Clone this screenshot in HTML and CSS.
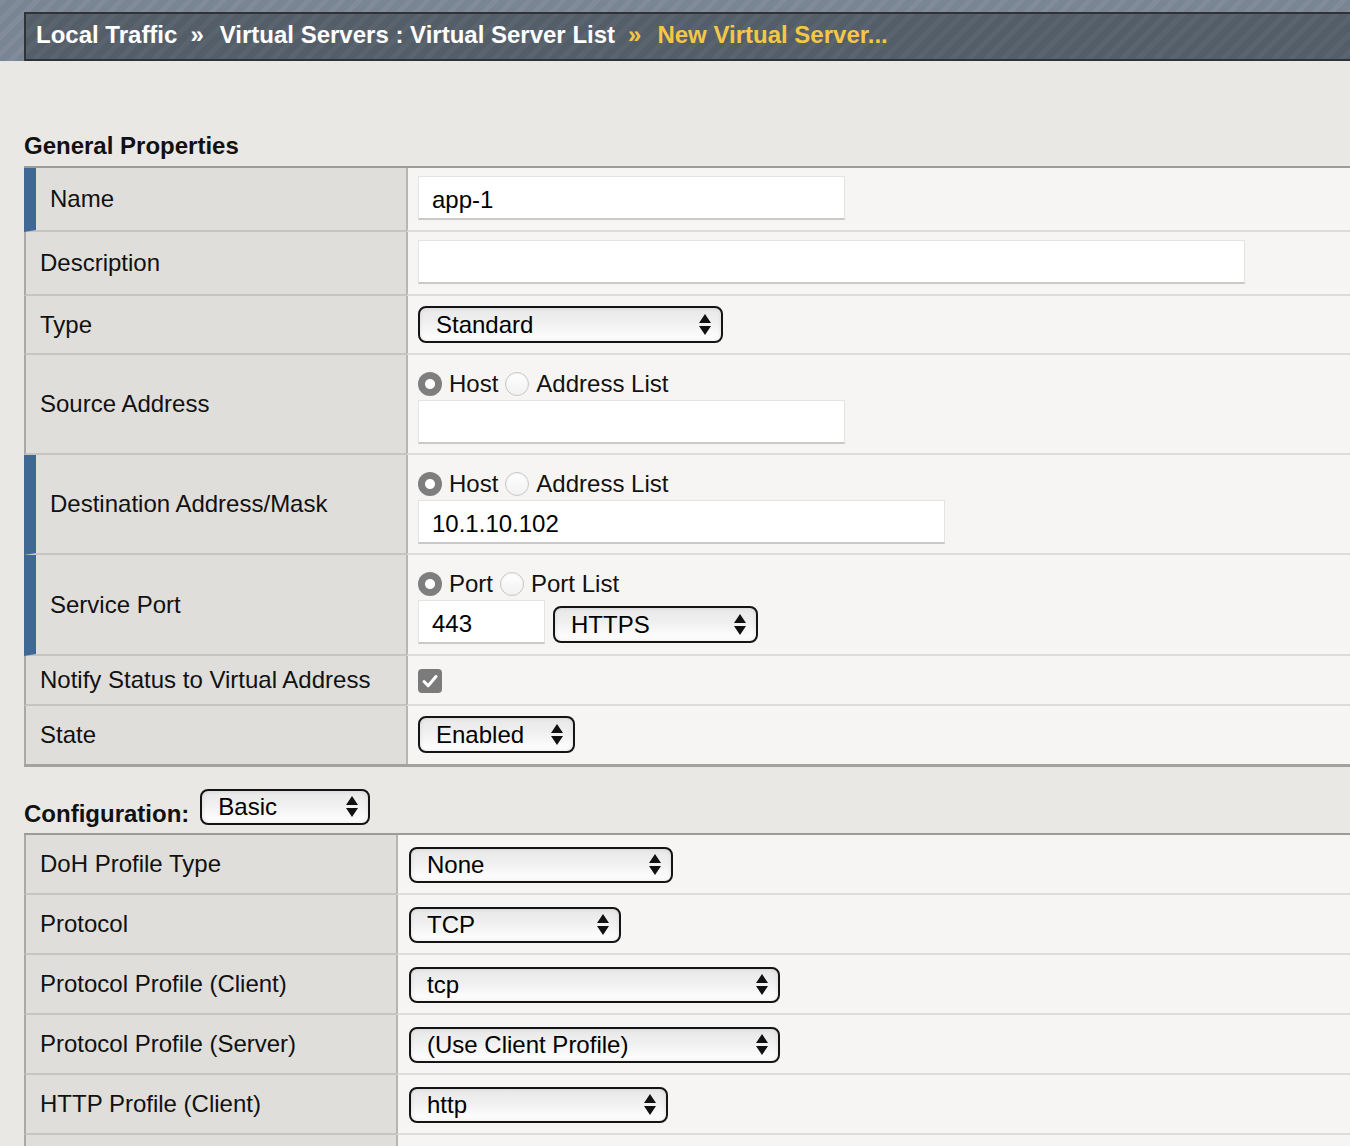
FILE: index.html
```html
<!DOCTYPE html>
<html lang="en">
<head>
<meta charset="utf-8">
<title>New Virtual Server</title>
<link rel="stylesheet" href="styles.css">
</head>
<body>
<header class="topbar">
  <nav class="crumbs">
    <span class="crumb">Local Traffic</span>
    <span class="sep">»</span>
    <span class="crumb">Virtual Servers : Virtual Server List</span>
    <span class="sep current">»</span>
    <span class="crumb current">New Virtual Server...</span>
  </nav>
</header>

<main class="content">
  <h2 class="section-title">General Properties</h2>

  <div class="ptable t1">
    <div class="row">
      <div class="label req">Name</div>
      <div class="value v-input"><input class="text w427" type="text" value="app-1"></div>
    </div>
    <div class="row">
      <div class="label">Description</div>
      <div class="value v-input"><input class="text w827" type="text" value=""></div>
    </div>
    <div class="row">
      <div class="label">Type</div>
      <div class="value v-select">
        <div class="select w305"><span class="sel-text">Standard</span><svg class="arrows" viewBox="0 0 12 21" width="12" height="21"><path d="M6 0L12 9L0 9Z M0 12L12 12L6 21Z"/></svg></div>
      </div>
    </div>
    <div class="row">
      <div class="label">Source Address</div>
      <div class="value v-radio">
        <div class="radios">
          <input class="radio" type="radio" name="src" checked><span class="rlabel">Host</span>
          <input class="radio" type="radio" name="src"><span class="rlabel">Address List</span>
        </div>
        <input class="text w427" type="text" value="">
      </div>
    </div>
    <div class="row">
      <div class="label req">Destination Address/Mask</div>
      <div class="value v-radio">
        <div class="radios">
          <input class="radio" type="radio" name="dst" checked><span class="rlabel">Host</span>
          <input class="radio" type="radio" name="dst"><span class="rlabel">Address List</span>
        </div>
        <input class="text w527" type="text" value="10.1.10.102">
      </div>
    </div>
    <div class="row">
      <div class="label req">Service Port</div>
      <div class="value v-radio v-port">
        <div class="radios">
          <input class="radio" type="radio" name="port" checked><span class="rlabel">Port</span>
          <input class="radio" type="radio" name="port"><span class="rlabel">Port List</span>
        </div>
        <div class="port-row">
          <input class="text w127" type="text" value="443">
          <div class="select w205 port-select"><span class="sel-text">HTTPS</span><svg class="arrows" viewBox="0 0 12 21" width="12" height="21"><path d="M6 0L12 9L0 9Z M0 12L12 12L6 21Z"/></svg></div>
        </div>
      </div>
    </div>
    <div class="row">
      <div class="label">Notify Status to Virtual Address</div>
      <div class="value v-check">
        <span class="checkbox" role="checkbox" aria-checked="true"><svg viewBox="0 0 24 24" width="24" height="24"><path d="M6 12.5L10.2 16.8L18 7.5" fill="none" stroke="#fff" stroke-width="3" stroke-linecap="round" stroke-linejoin="round"/></svg></span>
      </div>
    </div>
    <div class="row">
      <div class="label">State</div>
      <div class="value v-select v-last">
        <div class="select w157"><span class="sel-text">Enabled</span><svg class="arrows" viewBox="0 0 12 21" width="12" height="21"><path d="M6 0L12 9L0 9Z M0 12L12 12L6 21Z"/></svg></div>
      </div>
    </div>
  </div>

  <div class="config">
    <span class="config-label">Configuration:</span>
    <div class="select s36 w170"><span class="sel-text">Basic</span><svg class="arrows" viewBox="0 0 12 21" width="12" height="21"><path d="M6 0L12 9L0 9Z M0 12L12 12L6 21Z"/></svg></div>
  </div>

  <div class="ptable t2">
    <div class="row">
      <div class="label">DoH Profile Type</div>
      <div class="value v-select2">
        <div class="select s36 w264"><span class="sel-text">None</span><svg class="arrows" viewBox="0 0 12 21" width="12" height="21"><path d="M6 0L12 9L0 9Z M0 12L12 12L6 21Z"/></svg></div>
      </div>
    </div>
    <div class="row">
      <div class="label">Protocol</div>
      <div class="value v-select2">
        <div class="select s36 w212"><span class="sel-text">TCP</span><svg class="arrows" viewBox="0 0 12 21" width="12" height="21"><path d="M6 0L12 9L0 9Z M0 12L12 12L6 21Z"/></svg></div>
      </div>
    </div>
    <div class="row">
      <div class="label">Protocol Profile (Client)</div>
      <div class="value v-select2">
        <div class="select s36 w371"><span class="sel-text">tcp</span><svg class="arrows" viewBox="0 0 12 21" width="12" height="21"><path d="M6 0L12 9L0 9Z M0 12L12 12L6 21Z"/></svg></div>
      </div>
    </div>
    <div class="row">
      <div class="label">Protocol Profile (Server)</div>
      <div class="value v-select2">
        <div class="select s36 w371"><span class="sel-text">(Use Client Profile)</span><svg class="arrows" viewBox="0 0 12 21" width="12" height="21"><path d="M6 0L12 9L0 9Z M0 12L12 12L6 21Z"/></svg></div>
      </div>
    </div>
    <div class="row">
      <div class="label">HTTP Profile (Client)</div>
      <div class="value v-select2">
        <div class="select s36 w259"><span class="sel-text">http</span><svg class="arrows" viewBox="0 0 12 21" width="12" height="21"><path d="M6 0L12 9L0 9Z M0 12L12 12L6 21Z"/></svg></div>
      </div>
    </div>
    <div class="row">
      <div class="label"></div>
      <div class="value v-empty"></div>
    </div>
  </div>
</main>
</body>
</html>
```

FILE: styles.css
```css
*, *::before, *::after { box-sizing: border-box; }

html, body {
  margin: 0;
  padding: 0;
  overflow: hidden;
}

body {
  font-family: "Liberation Sans", Arial, Helvetica, sans-serif;
  font-size: 24px;
  color: #111;
  background: #e9e8e4;
}

/* ---------- top breadcrumb bar ---------- */
.topbar {
  height: 61px;
  padding: 12px 0 0 24px;
  background-color: #7a8594;
  background-image: repeating-linear-gradient(135deg, rgba(255,255,255,0.05) 0 5px, rgba(255,255,255,0) 5px 12px);
}

.crumbs {
  height: 49px;
  display: flex;
  align-items: center;
  padding: 0 0 3px 10px;
  border: 2px solid #2f3338;
  border-right: 0;
  background-color: #545e69;
  background-image: repeating-linear-gradient(135deg, rgba(255,255,255,0.035) 0 5px, rgba(255,255,255,0) 5px 12px);
  color: #fff;
  font-weight: bold;
  font-size: 24px;
  line-height: 42px;
  white-space: nowrap;
}

.sep { margin: 0 16px 0 13px; }
.current { color: #f6c745; }

/* ---------- content ---------- */
.content { padding-left: 24px; }

.section-title {
  margin: 71px 0 6px;
  font-size: 24px;
  line-height: 28px;
  font-weight: bold;
  color: #111;
}

.ptable {
  border-top: 2px solid #9c9b98;
  border-bottom: 3px solid #a3a29f;
}

.row {
  display: grid;
  grid-template-columns: 382px 1fr;
}
.t2 .row { grid-template-columns: 372px 1fr; }

.label {
  display: flex;
  align-items: center;
  padding-left: 14px;
  background: #dfdeda;
  border-left: 2px solid #aaa9a6;
  border-bottom: 2px solid #c6c5c1;
  color: #111;
  line-height: 28px;
}
.label.req { border-left: 12px solid #3f6894; }

.value {
  background: #f6f5f3;
  border-left: 2px solid #b7b6b3;
  border-bottom: 2px solid #dddcd9;
  padding-left: 10px;
}
.t2 .value { padding-left: 11px; }

.row:last-child > .label,
.row:last-child > .value { border-bottom: 0; }

.v-input  { padding-top: 8px;  padding-bottom: 10px; }
.v-select { padding-top: 10px; padding-bottom: 10px; }
.v-last   { padding-bottom: 11px; }
.v-radio  { padding-top: 15px; padding-bottom: 9px; }
.v-port   { padding-bottom: 10px; }
.v-check  { padding-top: 13px; padding-bottom: 11px; }
.v-select2 { padding-top: 12px; padding-bottom: 10px; }
.v-empty  { height: 58px; }

/* ---------- text inputs ---------- */
.text {
  display: block;
  height: 44px;
  margin: 0;
  padding: 5px 0 0 13px;
  border: 1px solid #e3e3e1;
  border-bottom: 2px solid #c9c9c7;
  background: #fff;
  color: #000;
  font: inherit;
  font-size: 24px;
  outline: none;
}

.w127 { width: 127px; }
.w157 { width: 157px; }
.w170 { width: 170px; }
.w205 { width: 205px; }
.w212 { width: 212px; }
.w259 { width: 259px; }
.w264 { width: 264px; }
.w305 { width: 305px; }
.w371 { width: 371px; }
.w427 { width: 427px; }
.w527 { width: 527px; }
.w827 { width: 827px; }

/* ---------- select look-alike ---------- */
.select {
  display: flex;
  align-items: center;
  height: 37px;
  padding: 0 10px 0 16px;
  border: 2px solid #141414;
  border-radius: 8px;
  background: linear-gradient(to bottom, #e8e8e8 0%, #efefef 40%, #f9f9f9 75%, #ffffff 100%);
  box-shadow: inset 0 0 4px rgba(0,0,0,0.10);
  color: #000;
  line-height: 33px;
}
.select.s36 { height: 36px; line-height: 31px; padding-bottom: 1px; }

.sel-text {
  flex: 1;
  white-space: nowrap;
  overflow: hidden;
}
.arrows { flex: none; fill: #111; }

/* ---------- radios ---------- */
.radios {
  display: flex;
  align-items: center;
  height: 28px;
  margin-bottom: 2px;
  line-height: 28px;
  color: #111;
}
.radio {
  -webkit-appearance: none;
  appearance: none;
  flex: none;
  width: 24px;
  height: 24px;
  margin: 0;
  border-radius: 50%;
  border: 1px solid #c8c8c8;
  background: linear-gradient(to bottom, #ffffff, #f1f1f1);
  box-shadow: inset 0 1px 2px rgba(0,0,0,0.06);
}
.radio:checked {
  border: 0;
  background: radial-gradient(circle at center, #ffffff 0 4.5px, #7e7e7e 5.5px);
  box-shadow: none;
}
.rlabel { margin: 0 7px; }

.port-row {
  display: flex;
  align-items: flex-start;
  gap: 8px;
}
.port-select { margin-top: 6px; }

/* ---------- checkbox ---------- */
.checkbox {
  display: block;
  width: 24px;
  height: 24px;
  border-radius: 4px;
  background: #7b7b7b;
}
.checkbox svg { display: block; }

/* ---------- configuration line ---------- */
.config {
  display: flex;
  align-items: flex-start;
  height: 36px;
  margin: 22px 0 8px;
}
.config-label {
  margin: 11px 11px 0 0;
  font-weight: bold;
  font-size: 24px;
  line-height: 28px;
  color: #111;
}
```
